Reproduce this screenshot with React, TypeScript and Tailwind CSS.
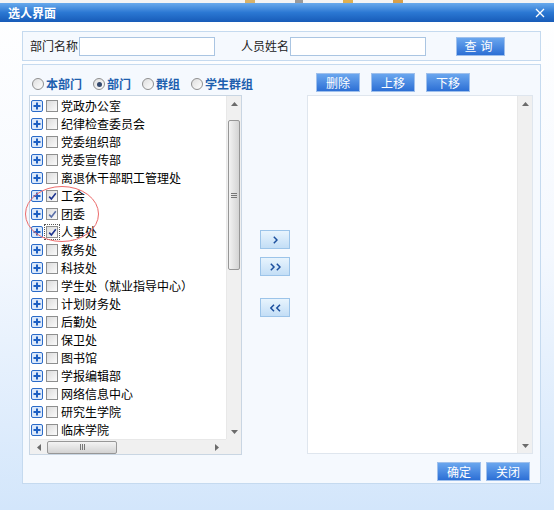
import React from "react";

const FONT = { fontFamily: '"Noto Sans CJK SC", "Noto Sans", sans-serif' };

const depts = [
  "党政办公室",
  "纪律检查委员会",
  "党委组织部",
  "党委宣传部",
  "离退休干部职工管理处",
  "工会",
  "团委",
  "人事处",
  "教务处",
  "科技处",
  "学生处（就业指导中心）",
  "计划财务处",
  "后勤处",
  "保卫处",
  "图书馆",
  "学报编辑部",
  "网络信息中心",
  "研究生学院",
  "临床学院",
];

function BlueButton({ label, wide }: { label: string; wide?: boolean }) {
  return (
    <button
      className={`flex h-[19px] items-center justify-center border border-[#9fc0ec] bg-gradient-to-b from-[#6aa6ee] to-[#2c6fd5] text-[12px] leading-none text-white ${
        wide ? "w-[49px] tracking-[4px]" : "w-[44px]"
      }`}
    >
      {label}
    </button>
  );
}

function Chevrons({ dir, count }: { dir: "right" | "left"; count: number }) {
  const one = dir === "right" ? "M0.8 0.8 L4 4 L0.8 7.2" : "M4 0.8 L0.8 4 L4 7.2";
  return (
    <svg width={count === 1 ? 5 : 11} height="8" viewBox={count === 1 ? "0 0 5 8" : "0 0 11 8"}>
      <path d={one} fill="none" stroke="#1c4f9e" strokeWidth="1.5" />
      {count === 2 && (
        <path d={one} transform="translate(6 0)" fill="none" stroke="#1c4f9e" strokeWidth="1.5" />
      )}
    </svg>
  );
}

function ArrowButton({ dir, count }: { dir: "right" | "left"; count: number }) {
  return (
    <button className="flex h-[19px] w-[30px] items-center justify-center border border-[#9cc4e9] bg-gradient-to-b from-[#e8f4fd] to-[#c3def6]">
      <Chevrons dir={dir} count={count} />
    </button>
  );
}

function PlusIcon() {
  return (
    <svg width="12" height="12" viewBox="0 0 12 12" className="shrink-0">
      <rect x="0.5" y="0.5" width="11" height="11" rx="1.5" fill="#dce9fa" stroke="#2b6bc8" />
      <path d="M2.5 6h7M6 2.5v7" stroke="#1d5fc2" strokeWidth="2" />
    </svg>
  );
}

function Checkbox({ checked, dim }: { checked?: boolean; dim?: boolean }) {
  return (
    <span className="flex h-[12px] w-[12px] shrink-0 items-center justify-center border border-[#8e8f8f] bg-gradient-to-br from-[#dcdcdc] to-[#fbfbfb]">
      {checked && (
        <svg width="9" height="9" viewBox="0 0 9 9">
          <path
            d="M1.2 4.6 L3.4 7 L7.8 1.3"
            fill="none"
            stroke={dim ? "#5a6fa8" : "#1f3590"}
            strokeWidth="1.6"
          />
        </svg>
      )}
    </span>
  );
}

function Radio({ on, label }: { on?: boolean; label: string }) {
  return (
    <span className="flex shrink-0 items-center gap-[2px]">
      <span className="flex h-[12px] w-[12px] items-center justify-center rounded-full border border-[#8f8f8f] bg-gradient-to-br from-[#dedede] to-white">
        {on && <span className="h-[5px] w-[5px] rounded-full bg-[#34496e]" />}
      </span>
      <span className="whitespace-nowrap text-[12px] font-bold leading-none text-[#1d5fae]">{label}</span>
    </span>
  );
}

function Tri({ dir }: { dir: "up" | "down" | "left" | "right" }) {
  const d = {
    up: "M0 4 L3.5 0 L7 4Z",
    down: "M0 0 L3.5 4 L7 0Z",
    left: "M4 0 L0 3.5 L4 7Z",
    right: "M0 0 L4 3.5 L0 7Z",
  }[dir];
  const vert = dir === "up" || dir === "down";
  return (
    <svg width={vert ? 7 : 4} height={vert ? 4 : 7} viewBox={vert ? "0 0 7 4" : "0 0 4 7"}>
      <path d={d} fill="#6b6b6b" />
    </svg>
  );
}

function VScroll({ thumb }: { thumb?: boolean }) {
  return (
    <div className="flex h-full flex-col items-center border-l border-[#e8e8e8] bg-[#f0f0f0]">
      <div className="flex h-[15px] items-center justify-center">
        <Tri dir="up" />
      </div>
      <div className="w-full flex-1 px-[1px]">
        {thumb && (
          <div className="mt-[9px] flex h-[150px] w-full items-center justify-center rounded-[2px] border border-[#979797] bg-gradient-to-r from-[#f3f3f3] via-[#e3e3e3] to-[#d4d4d4]">
            <div className="flex flex-col gap-[1px]">
              <span className="h-px w-[6px] bg-[#777]" />
              <span className="h-px w-[6px] bg-[#777]" />
              <span className="h-px w-[6px] bg-[#777]" />
            </div>
          </div>
        )}
      </div>
      <div className="flex h-[15px] items-center justify-center">
        <Tri dir="down" />
      </div>
    </div>
  );
}

export default function App() {
  return (
    <div
      className="relative h-[510px] w-[554px] overflow-hidden bg-gradient-to-b from-white via-[#f4f8fe] to-[#d3e6fb]"
      style={FONT}
    >
      {/* strip of the page behind */}
      <div className="flex h-[3px] items-end gap-[40px] bg-[#f4f4f4] pl-[245px]">
        <span className="h-[3px] w-[10px] bg-[#d9b36a]" />
        <span className="h-[3px] w-[8px] bg-[#9a9a9a]" />
        <span className="h-[3px] w-[10px] bg-[#e0b050]" />
        <span className="h-[3px] w-[10px] bg-[#d9a04a]" />
      </div>

      {/* title bar */}
      <div className="flex h-[19px] items-center justify-between bg-gradient-to-b from-[#69aaec] via-[#2b78d3] to-[#175bb8] pl-[8px] pr-[9px]">
        <span className="text-[12px] font-bold leading-none text-white">选人界面</span>
        <svg width="10" height="10" viewBox="0 0 10 10">
          <path d="M1 1 L9 9 M9 1 L1 9" stroke="white" strokeWidth="1.3" />
        </svg>
      </div>

      <div className="pl-[22px] pr-[13px] pt-[9px]">
        {/* search panel */}
        <div className="flex h-[30px] items-center border border-[#c5daef] bg-[#f5f9fe] pl-[7px] text-[12px] text-[#222]">
          <span className="leading-none">部门名称</span>
          <input className="ml-[1px] h-[19px] w-[136px] border border-[#aac5e2] bg-white" />
          <span className="ml-[26px] leading-none">人员姓名</span>
          <input className="ml-[1px] h-[19px] w-[136px] border border-[#aac5e2] bg-white" />
          <span className="ml-[30px]">
            <BlueButton label="查询" wide />
          </span>
        </div>

        {/* main panel */}
        <div className="mt-[3px] flex h-[420px] border border-[#c5daef] bg-[#f5f9fe] pl-[6px] pt-[8px]">
          {/* left column */}
          <div className="flex w-[213px] flex-col">
            <div className="flex h-[22px] items-center gap-[11px] pl-[3px]">
              <Radio label="本部门" />
              <Radio on label="部门" />
              <Radio label="群组" />
              <Radio label="学生群组" />
            </div>
            <div className="relative grid h-[360px] grid-cols-[1fr_15px] grid-rows-[1fr_15px] border border-[#c9d6e3] bg-white">
              <div className="overflow-hidden pt-px">
                {depts.map((d, i) => (
                  <div key={d} className="flex h-[18px] items-center gap-[3px] pl-[1px]">
                    <PlusIcon />
                    <span
                      className={
                        i === 7 ? "outline outline-1 outline-dotted outline-[#555] outline-offset-[1px]" : ""
                      }
                    >
                      <Checkbox checked={i >= 5 && i <= 7} dim={i === 6} />
                    </span>
                    <span className="whitespace-nowrap text-[12px] leading-none text-black">{d}</span>
                  </div>
                ))}
              </div>
              <VScroll thumb />
              <div className="flex items-center border-t border-[#e8e8e8] bg-[#f0f0f0] pl-[7px] pr-[7px]">
                <Tri dir="left" />
                <div className="ml-[6px] flex h-[13px] w-[70px] items-center justify-center rounded-[2px] border border-[#979797] bg-gradient-to-b from-[#f3f3f3] via-[#e3e3e3] to-[#d3d3d3]">
                  <div className="flex gap-[1px]">
                    <span className="h-[6px] w-px bg-[#777]" />
                    <span className="h-[6px] w-px bg-[#777]" />
                    <span className="h-[6px] w-px bg-[#777]" />
                  </div>
                </div>
                <div className="flex-1" />
                <Tri dir="right" />
              </div>
              <div className="bg-[#f0f0f0]" />
              <svg
                className="pointer-events-none absolute left-[-6px] top-[89px]"
                width="76"
                height="58"
                viewBox="0 0 76 58"
              >
                <ellipse cx="38" cy="29" rx="36.5" ry="27.5" fill="none" stroke="#ec6b6b" strokeWidth="1" />
              </svg>
            </div>
          </div>

          {/* middle buttons */}
          <div className="ml-[18px] flex w-[30px] flex-col pt-[157px]">
            <ArrowButton dir="right" count={1} />
            <div className="mt-[8px]">
              <ArrowButton dir="right" count={2} />
            </div>
            <div className="mt-[22px]">
              <ArrowButton dir="left" count={2} />
            </div>
          </div>

          {/* right column */}
          <div className="ml-[17px] flex w-[226px] flex-col">
            <div className="flex gap-[11px] pl-[9px]">
              <BlueButton label="删除" />
              <BlueButton label="上移" />
              <BlueButton label="下移" />
            </div>
            <div className="mt-[3px] grid h-[359px] grid-cols-[1fr_15px] border border-[#dfe6ee] bg-white">
              <div />
              <VScroll />
            </div>
            <div className="mt-[8px] flex justify-end gap-[5px] pr-[3px]">
              <BlueButton label="确定" />
              <BlueButton label="关闭" />
            </div>
          </div>
        </div>
      </div>
    </div>
  );
}
